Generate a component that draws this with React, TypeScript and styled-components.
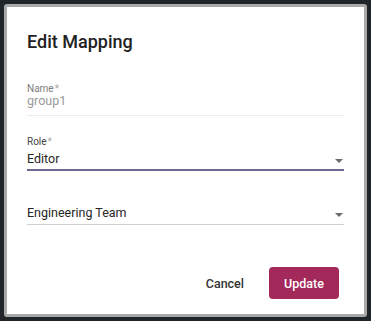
import styled, { createGlobalStyle } from 'styled-components'

const GlobalStyle = createGlobalStyle`
	html, body {
		margin: 0;
		padding: 0;
		background: #1f2528;
		font-family: Roboto, "Noto Sans", Arial, sans-serif;
	}
`;

export default function App() {
	return (
		<>
			<GlobalStyle />
			<Backdrop>
				<Dialog>
					<Title>Edit Mapping</Title>

					<Field $gap={30} $pad={7} $line="1px solid #ececec">
						<Label $muted>Name<Star>*</Star></Label>
						<Row>
							<Value $disabled>group1</Value>
						</Row>
					</Field>

					<Field $gap={21} $pad={3} $line="2px solid #6b6a8e">
						<Label>Role<Star>*</Star></Label>
						<Row $labelled>
							<Value>Editor</Value>
							<Arrow />
						</Row>
					</Field>

					<Field $gap={35} $pad={4} $line="1px solid #cfcfcf">
						<Row>
							<Value>Engineering Team</Value>
							<Arrow />
						</Row>
					</Field>

					<Actions>
						<TextButton type="button">Cancel</TextButton>
						<PrimaryButton type="button">Update</PrimaryButton>
					</Actions>
				</Dialog>
			</Backdrop>
		</>
	)
}

const Backdrop = styled.div`
	box-sizing: border-box;
	height: 321px;
	width: 371px;
	padding: 4px;
`;

const Dialog = styled.div`
	box-sizing: border-box;
	height: 100%;
	background: #fff;
	border: 3px solid #a9a9a9;
	border-radius: 3px;
	padding: 23px 20px 0 20px;
	display: flex;
	flex-direction: column;
`;

const Title = styled.h2`
	margin: 0;
	font-size: 18px;
	line-height: 24px;
	font-weight: 500;
	color: #222;
`;

const Field = styled.div<{ $gap: number; $pad: number; $line: string }>`
	display: flex;
	flex-direction: column;
	margin-top: ${p => p.$gap}px;
	padding-bottom: ${p => p.$pad}px;
	border-bottom: ${p => p.$line};
`;

const Label = styled.div<{ $muted?: boolean }>`
	font-size: 10px;
	line-height: 10px;
	color: ${p => (p.$muted ? '#7d7d7d' : '#444')};
`;

const Star = styled.span`
	color: #aaa;
	margin-left: 1px;
`;

const Row = styled.div<{ $labelled?: boolean }>`
	display: flex;
	align-items: center;
	justify-content: space-between;
	margin-top: ${p => (p.$labelled ? 5 : 0)}px;
`;

const Value = styled.div<{ $disabled?: boolean }>`
	font-size: 12.5px;
	line-height: 14px;
	color: ${p => (p.$disabled ? '#9a9a9a' : '#262626')};
`;

const Arrow = styled.span`
	width: 0;
	height: 0;
	margin: 3px 1px 0 0;
	border-left: 4px solid transparent;
	border-right: 4px solid transparent;
	border-top: 4px solid #6a6a6a;
`;

const Actions = styled.div`
	display: flex;
	justify-content: flex-end;
	align-items: center;
	gap: 13px;
	margin-top: 42px;
	margin-right: 5px;
`;

const TextButton = styled.button`
	height: 32px;
	padding: 0 12px;
	border: none;
	background: transparent;
	font-family: inherit;
	font-size: 12.5px;
	font-weight: 500;
	color: #333;
	cursor: pointer;
`;

const PrimaryButton = styled.button`
	height: 32px;
	width: 70px;
	padding: 0;
	border: none;
	border-radius: 4px;
	background: #a3295a;
	font-family: inherit;
	font-size: 12.5px;
	font-weight: 500;
	color: #fff;
	cursor: pointer;
`;
